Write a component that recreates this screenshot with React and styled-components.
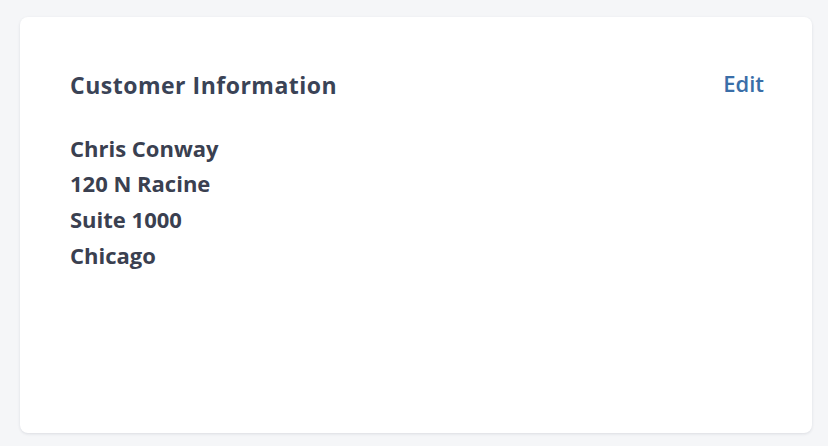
import React from 'react';
import styled, { createGlobalStyle } from 'styled-components';

const GlobalStyle = createGlobalStyle`
  html, body {
    margin: 0;
    padding: 0;
    background: #f5f6f8;
  }
  body {
    font-family: "Open Sans", Lato, Arial, sans-serif;
  }
`;

const Page = styled.div`
  height: 446px;
  box-sizing: border-box;
  padding: 17px 16px 13px 20px;
  display: flex;
`;

const Card = styled.div`
  flex: 1;
  background: #ffffff;
  border-radius: 8px;
  box-shadow: 0 1px 3px rgba(40, 50, 70, 0.12);
  padding: 53px 48px 0 50px;
  box-sizing: border-box;
`;

const Header = styled.div`
  display: flex;
  justify-content: space-between;
  align-items: flex-start;
  margin-bottom: 30.5px;
`;

const Title = styled.h2`
  margin: 0;
  font-size: 23px;
  line-height: 30px;
  font-weight: 700;
  letter-spacing: 0.5px;
  color: #3a4356;
`;

const EditLink = styled.a`
  margin-top: -2px;
  font-size: 22px;
  line-height: 30px;
  font-weight: 600;
  color: #3a6ea8;
  text-decoration: none;
  cursor: pointer;
`;

const Address = styled.div`
  display: flex;
  flex-direction: column;
`;

const Line = styled.div`
  font-size: 22px;
  font-weight: 700;
  line-height: 35.7px;
  color: #3a4050;
`;

const lines = ['Chris Conway', '120 N Racine', 'Suite 1000', 'Chicago'];

const App = () => (
  <>
    <GlobalStyle />
    <Page>
      <Card>
        <Header>
          <Title>Customer Information</Title>
          <EditLink>Edit</EditLink>
        </Header>
        <Address>
          {lines.map((l) => (
            <Line key={l}>{l}</Line>
          ))}
        </Address>
      </Card>
    </Page>
  </>
);

export default App;
